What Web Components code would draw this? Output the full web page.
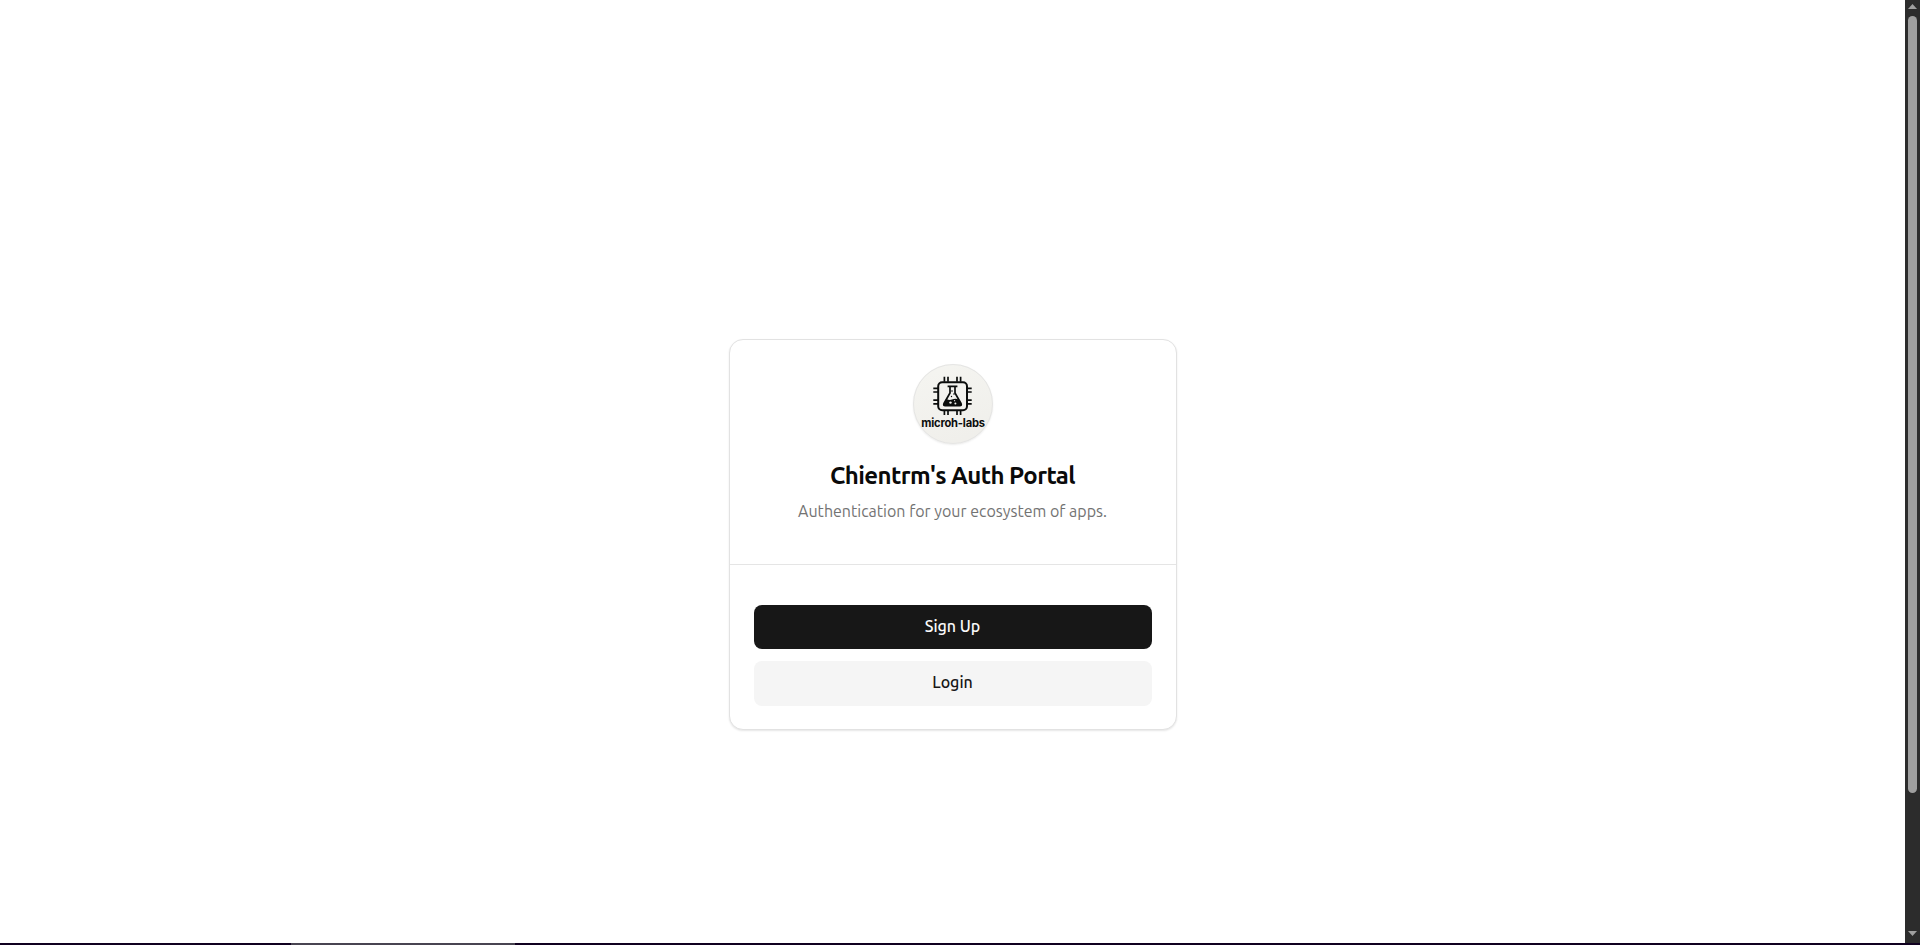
<!DOCTYPE html>
<html lang="en"><head><meta charset="utf-8"><title>Chientrm's Auth Portal</title>
<style>html,body{margin:0;height:100%;overflow:hidden;background:#fff;font-family:Ubuntu,"Noto Sans",sans-serif}</style></head>
<body><auth-page></auth-page>
<script>
const define=(name,html)=>customElements.define(name,class extends HTMLElement{
  constructor(){super();const t=document.createElement('template');t.innerHTML=html;this.attachShadow({mode:'open'}).append(t.content.cloneNode(true));}
});
define('lab-logo',`<style>:host{display:block;width:80px;height:80px;border-radius:50%;box-shadow:0 1px 2px #00000014;background:linear-gradient(160deg,#f5f5f1,#efeeea)}svg{display:block}</style>
<svg width="80" height="80" viewBox="0 0 80 80"><circle cx="40" cy="40" r="39.5" fill="none" stroke="#e5e5e4"/>
<g stroke="#0b0d0c" fill="none"><path stroke-width="1.7" d="M31.4 12.8v5M35 12.8v5M44 12.8v5M47.6 12.8v5M31.4 46v5M35 46v5M44 46v5M47.6 46v5M20.3 24.4h5M20.3 28h5M20.3 36.2h5M20.3 39.8h5M53.7 24.4h5M53.7 28h5M53.7 36.2h5M53.7 39.8h5"/>
<rect x="25.2" y="18.2" width="28.8" height="28" rx="4" stroke-width="2"/><path stroke-width="1.7" d="M34.6 22.3h9.8M37 22.5v6.5l-6 10.5q-1 2.2 1.3 2.2h14.4q2.3 0 1.3-2.2l-6-10.5v-6.5"/></g>
<path fill="#0b0d0c" d="M33.4 35q3 1.5 5.6.6 3.4-1.4 6.6-.2l3 4.5q.5 2-2 2H32.4q-2.5 0-2-2z"/>
<g fill="#f4f4f0"><circle cx="37.5" cy="38.6" r="1.2"/><circle cx="42.4" cy="39.6" r="1"/><circle cx="41.6" cy="36.7" r=".6"/></g><g fill="#0b0d0c"><circle cx="39" cy="27" r=".8"/><circle cx="41" cy="30" r=".8"/><circle cx="38.5" cy="32.5" r=".7"/></g>
<text x="40" y="63" text-anchor="middle" textLength="63.5" lengthAdjust="spacingAndGlyphs" font-family="Inter,sans-serif" font-weight="700" font-size="11.4" letter-spacing="-.2" fill="#0b0d0c">microh-labs</text></svg>`);
define('auth-button',`<style>:host{display:block}button{display:block;width:100%;height:44px;padding:0 0 2px;border:0;border-radius:8px;background:#171717;color:#fafafa;font:500 16px/42px Ubuntu,"Noto Sans",sans-serif}:host([secondary]) button{height:45px;padding-bottom:3px;background:#f5f5f5;color:#171717}</style><button><slot></slot></button>`);
define('auth-card',`<style>:host{display:block;box-sizing:border-box;width:448px;height:391px;border:1px solid #e2e2e2;border-radius:14px;background:#fff;box-shadow:0 1px 2px #0000001a}
header{box-sizing:border-box;height:225px;padding-top:24px;border-bottom:1px solid #e5e5e5;display:flex;flex-direction:column;align-items:center}
.title{margin:16px 0 0;font-size:24px;line-height:32px;font-weight:600;letter-spacing:-.6px;color:#0a0a0a;white-space:nowrap}.sub{margin:3px 0 0;font-size:16px;line-height:32px;color:#737373;font-weight:400}
main{padding:40px 24px 24px;display:grid;gap:12px}</style>
<header><lab-logo></lab-logo><h1 class="title">Chientrm's Auth Portal</h1><p class="sub">Authentication for your ecosystem of apps.</p></header>
<main><auth-button>Sign Up</auth-button><auth-button secondary>Login</auth-button></main>`);
define('scroll-rail',`<style>:host{width:15px;background:#2c2c2c;display:flex;flex-direction:column;align-items:center}svg{display:block;flex:none}.thumb{width:9px;height:777px;border-radius:5px;background:#9f9f9f}.gap{flex:1}</style>
<svg width="15" height="16"><path fill="#9f9f9f" d="M3 9h9L7.5 4z"/></svg><div class="thumb"></div><div class="gap"></div><svg width="15" height="16"><path fill="#9f9f9f" d="M3 4h9L7.5 9z"/></svg>`);
define('bottom-strip',`<style>:host{height:2px;background:#100020;display:flex}i{margin-left:291px;width:224px;background:#484451}</style><i></i>`);
define('auth-page',`<style>:host{height:945px;display:grid;grid-template-rows:943px 2px}.view{display:grid;grid-template-columns:1fr 15px}.stage{display:flex;justify-content:center;align-items:flex-start;padding-top:339px}</style>
<div class="view"><div class="stage"><auth-card></auth-card></div><scroll-rail></scroll-rail></div><bottom-strip></bottom-strip>`);
</script></body></html>
